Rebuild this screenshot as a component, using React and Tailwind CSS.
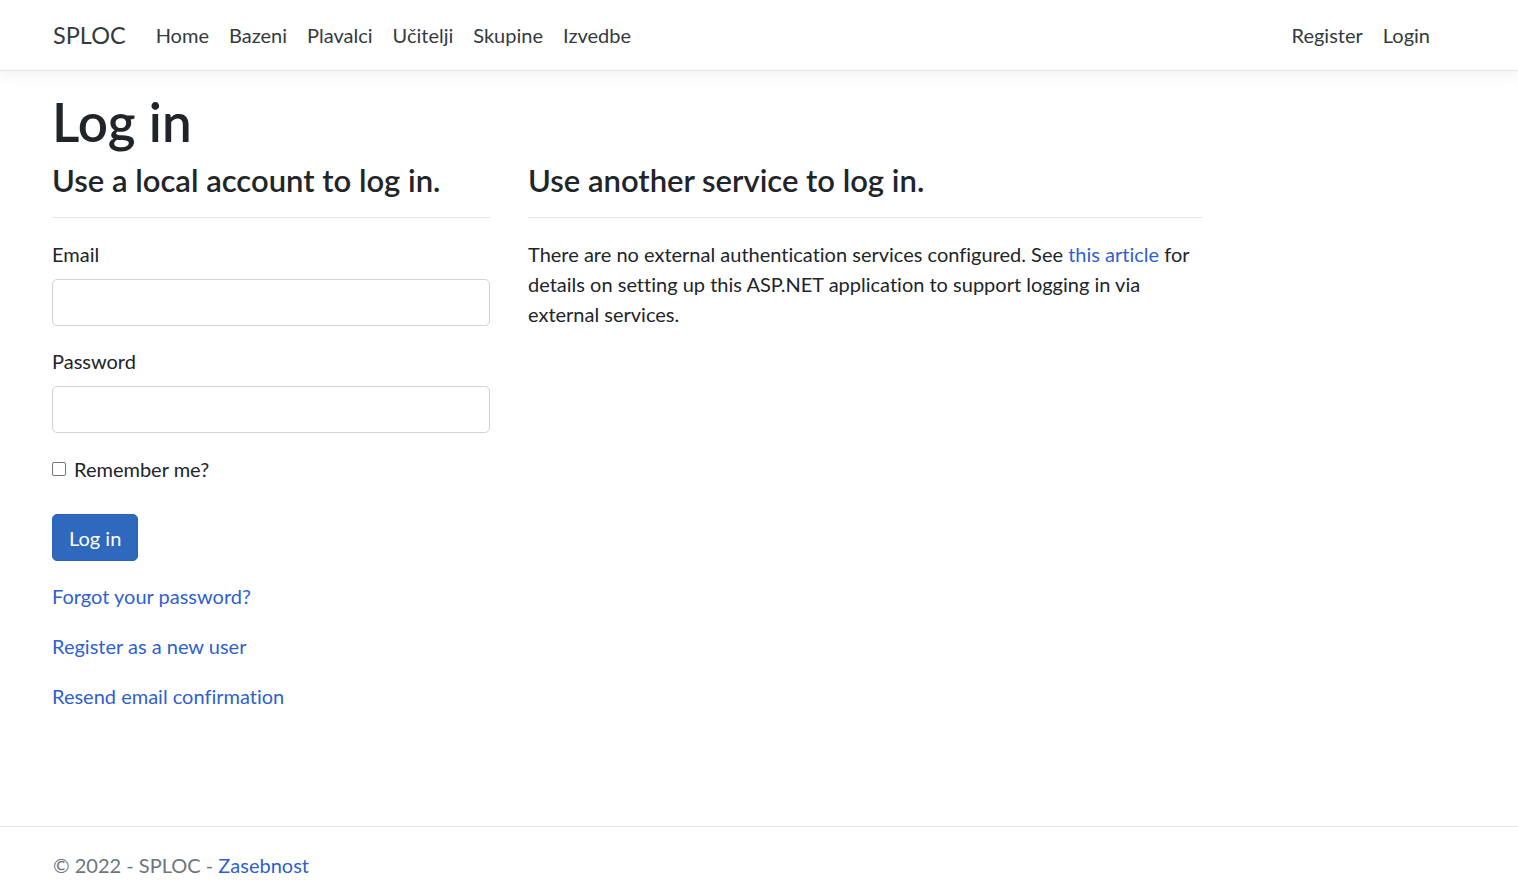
const navLinks = ['Home', 'Bazeni', 'Plavalci', 'Učitelji', 'Skupine', 'Izvedbe'];

function Field({ label, type }) {
  return (
    <div className="mb-[20px]">
      <label className="block mb-[10px]">{label}</label>
      <input
        type={type}
        className="block w-full h-[47px] px-[15px] border border-[#ced4da] rounded-[5px] bg-white outline-none"
      />
    </div>
  );
}

export default function App() {
  return (
    <div className="relative min-h-[891px] bg-white font-['Lato','Segoe_UI',sans-serif] [font-variant-ligatures:none] text-[20px] leading-[30px] text-[#212529]">
      {/* Navbar */}
      <header className="h-[71px] bg-white border-b border-[#e5e5e5] shadow-[0_5px_15px_rgba(0,0,0,0.05)]">
        <nav className="h-full flex items-center pl-[53px] pr-[78px]">
          <a className="text-[23.5px] text-[#343a40] mr-[20px]">SPLOC</a>
          <ul className="flex flex-1">
            {navLinks.map((l) => (
              <li key={l}>
                <a className="px-[10px] text-[#343a40]">{l}</a>
              </li>
            ))}
          </ul>
          <ul className="flex">
            <li><a className="px-[10px] text-[#343a40]">Register</a></li>
            <li><a className="px-[10px] text-[#343a40]">Login</a></li>
          </ul>
        </nav>
      </header>

      {/* Main */}
      <main className="px-[52px] pt-[21px]">
        <h1 className="text-[53px] leading-[60px] font-semibold mb-[10px]">Log in</h1>
        <div className="flex gap-[38px]">
          <section className="w-[438px]">
            <h4 className="text-[31px] leading-[36px] font-semibold whitespace-nowrap">Use a local account to log in.</h4>
            <hr className="mt-[19px] mb-[21px] border-t border-[rgba(0,0,0,0.1)]" />
            <Field label="Email" type="email" />
            <Field label="Password" type="password" />
            <div className="mb-[20px]">
              <label className="inline-flex items-center mb-[10px]">
                <span className="w-[14px] h-[14px] border border-[#767676] rounded-[2px] bg-white mr-[8px]" />
                Remember me?
              </label>
            </div>
            <div className="mb-[20px]">
              <button className="h-[47px] px-[16px] rounded-[5px] bg-[#2f69be] border border-[#2b62b3] text-white">
                Log in
              </button>
            </div>
            <p className="mb-[20px]"><a className="text-[#2f5fd0]">Forgot your password?</a></p>
            <p className="mb-[20px]"><a className="text-[#2f5fd0]">Register as a new user</a></p>
            <p className="mb-[20px]"><a className="text-[#2f5fd0]">Resend email confirmation</a></p>
          </section>
          <section className="w-[674px]">
            <h4 className="text-[31px] leading-[36px] font-semibold">Use another service to log in.</h4>
            <hr className="mt-[19px] mb-[21px] border-t border-[rgba(0,0,0,0.1)]" />
            <p>
              There are no external authentication services configured. See{' '}
              <a className="text-[#2f5fd0]">this article</a> for details on setting up this ASP.NET
              application to support logging in via external services.
            </p>
          </section>
        </div>
      </main>

      {/* Footer */}
      <footer className="absolute left-0 right-0 top-[826px] border-t border-[#e5e5e5] text-[#6c757d] leading-[77px] pl-[53px]">
        © 2022 - SPLOC - <a className="text-[#2f5fd0]">Zasebnost</a>
      </footer>
    </div>
  );
}
